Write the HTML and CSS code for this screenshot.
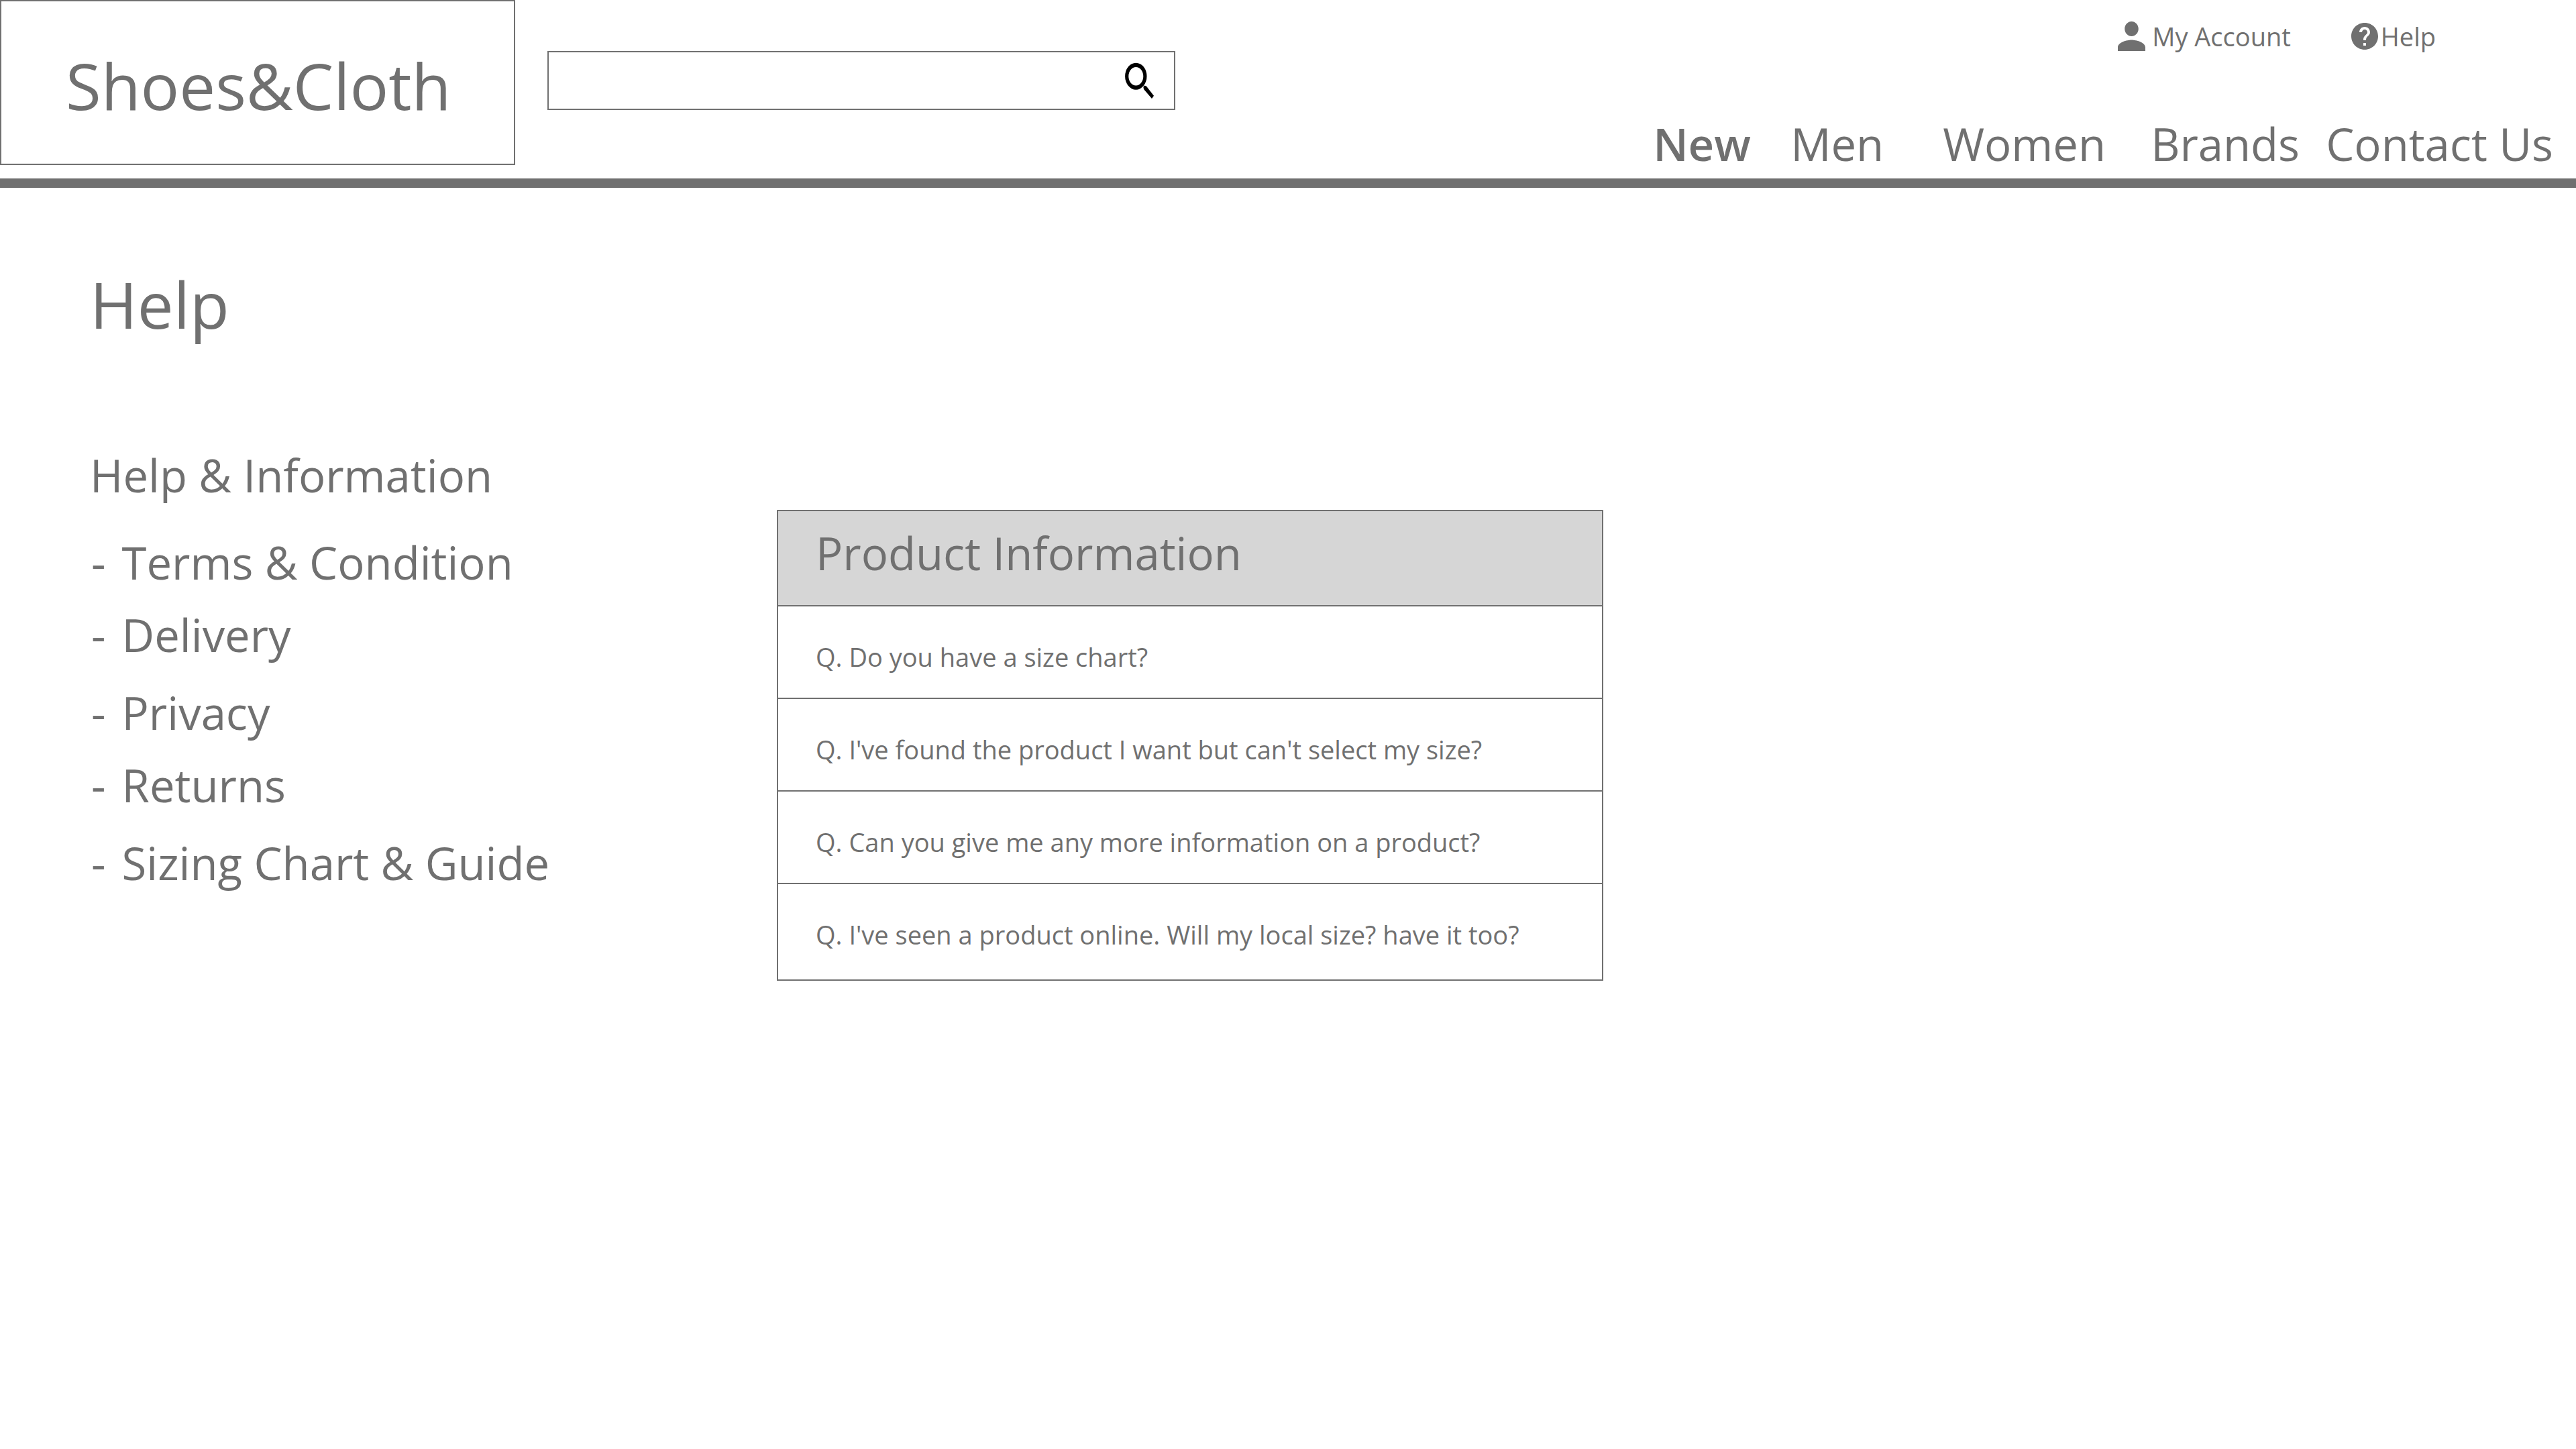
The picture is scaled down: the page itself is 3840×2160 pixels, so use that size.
FILE: index.html
```html
<!DOCTYPE html>
<html lang="en">
<head>
<meta charset="utf-8">
<meta name="viewport" content="width=device-width, initial-scale=1">
<title>Help - Shoes&amp;Cloth</title>
<link rel="stylesheet" href="styles.css">
</head>
<body>
<header class="header">
  <a class="logo" href="#">Shoes&amp;Cloth</a>
  <form class="search" role="search">
    <input class="search-input" type="search" aria-label="Search">
    <button class="search-button" type="submit" aria-label="Search">
      <svg class="search-icon" viewBox="0 0 48 58" aria-hidden="true">
        <path fill-rule="evenodd" d="M19.3 2.7a16.2 20 0 0 1 0 40a16.2 20 0 0 1 0-40zM19.3 9a11 13.7 0 0 0 0 27.4a11 13.7 0 0 0 0-27.4z"/>
        <path d="M30.3 38.2l2.2-1.7 2.4 1.1L46 51.8 43 56 31 42z"/>
      </svg>
    </button>
  </form>
  <div class="menus">
    <nav class="account" aria-label="Account">
      <a class="account-link" href="#">
        <svg class="icon-person" viewBox="4 4 16 16" preserveAspectRatio="none" aria-hidden="true"><path d="M12 12c2.21 0 4-1.79 4-4s-1.79-4-4-4-4 1.79-4 4 1.79 4 4 4zm0 2c-2.67 0-8 1.34-8 4v2h16v-2c0-2.66-5.33-4-8-4z"/></svg>
        My Account
      </a>
      <a class="account-link account-link-help" href="#">
        <svg class="icon-help" viewBox="2 2 20 20" aria-hidden="true"><path d="M12 2C6.48 2 2 6.48 2 12s4.48 10 10 10 10-4.48 10-10S17.52 2 12 2zm1 17h-2v-2h2v2zm2.07-7.75l-.9.92C13.45 12.9 13 13.5 13 15h-2v-.5c0-1.1.45-2.1 1.17-2.83l1.24-1.26c.37-.36.59-.86.59-1.41 0-1.1-.9-2-2-2s-2 .9-2 2H8c0-2.21 1.79-4 4-4s4 1.79 4 4c0 .88-.36 1.68-.93 2.25z"/></svg>
        Help
      </a>
    </nav>
    <nav class="nav" aria-label="Main">
      <a class="nav-new" href="#">New</a>
      <a href="#">Men</a>
      <a href="#">Women</a>
      <a href="#">Brands</a>
      <a href="#">Contact Us</a>
    </nav>
  </div>
</header>
<main class="main">
  <h1 class="title">Help</h1>
  <div class="columns">
    <aside class="topics">
      <h2 class="topics-title">Help &amp; Information</h2>
      <ul class="topics-list">
        <li><span>-</span><a href="#">Terms &amp; Condition</a></li>
        <li><span>-</span><a href="#">Delivery</a></li>
        <li><span>-</span><a href="#">Privacy</a></li>
        <li><span>-</span><a href="#">Returns</a></li>
        <li><span>-</span><a href="#">Sizing Chart &amp; Guide</a></li>
      </ul>
    </aside>
    <section class="faq">
      <h2 class="faq-title">Product Information</h2>
      <ul class="faq-list">
        <li><a href="#">Q. Do you have a size chart?</a></li>
        <li><a href="#">Q. I've found the product I want but can't select my size?</a></li>
        <li><a href="#">Q. Can you give me any more information on a product?</a></li>
        <li><a href="#">Q. I've seen a product online. Will my local size? have it too?</a></li>
      </ul>
    </section>
  </div>
</main>
</body>
</html>
```
FILE: styles.css
```css
:root {
  --ink: #707070;
  --size-small: 38px;
  --size-medium: 67px;
  --size-large: 96px;
}

* {
  box-sizing: border-box;
}

body {
  margin: 0;
  background: #fff;
  color: var(--ink);
  font-family: "Open Sans", "Noto Sans", sans-serif;
  font-size: var(--size-medium);
  line-height: 84px;
}

a {
  color: inherit;
  text-decoration: none;
}

h1,
h2,
ul {
  margin: 0;
  padding: 0;
  font-weight: 400;
  list-style: none;
}

svg {
  display: block;
  fill: currentColor;
}

/* Header */

.header {
  display: flex;
  align-items: flex-start;
  border-bottom: 14px solid var(--ink);
}

.logo {
  display: flex;
  align-items: center;
  flex: 0 0 20%;
  height: 246px;
  margin-bottom: 20px;
  padding: 8px 0 0 96px;
  border: 2px solid var(--ink);
  font-size: var(--size-large);
}

.search {
  display: flex;
  align-items: center;
  width: 936px;
  height: 88px;
  margin: 76px 0 0 48px;
  border: 2px solid var(--ink);
}

.search-input {
  flex: 1;
  min-width: 0;
  height: 100%;
  padding: 0 24px;
  border: 0;
  outline: 0;
  background: none;
  color: inherit;
  font: inherit;
  font-size: var(--size-small);
}

.search-button {
  padding: 0 28px 0 0;
  border: 0;
  background: none;
  color: #000;
}

.search-icon {
  width: 48px;
  height: 58px;
}

.menus {
  display: flex;
  flex-direction: column;
  align-items: flex-end;
  gap: 94px;
  margin-left: auto;
  padding: 30px 34px 10px 0;
}

.account {
  display: flex;
  gap: 90px;
  padding-right: 175px;
  font-size: var(--size-small);
  line-height: 48px;
}

.account-link {
  display: flex;
  align-items: center;
  gap: 10px;
}

.account-link-help {
  gap: 4px;
}

.icon-person {
  width: 41px;
  height: 44px;
}

.icon-help {
  width: 40px;
  height: 40px;
}

.nav {
  display: grid;
  grid-template-columns: 205px 227px 310px 261px auto;
  white-space: nowrap;
}

.nav-new {
  font-weight: 600;
}

/* Content */

.main {
  padding: 114px 134px;
}

.title {
  font-size: var(--size-large);
  line-height: 118px;
}

.columns {
  display: grid;
  grid-template-columns: 1024px minmax(0, 1232px);
  align-items: start;
  margin-top: 142px;
}

.topics {
  line-height: 108px;
}

.topics-title,
.faq-title {
  font-size: var(--size-medium);
}

.topics-list {
  margin-top: 22px;
  padding-left: 2px;
}

.topics-list li {
  display: flex;
  gap: 24px;
}

.topics-list li:nth-child(even) {
  margin-bottom: 8px;
}

.faq {
  margin-top: 106px;
  border: 2px solid var(--ink);
}

.faq-title {
  padding: 20px 56px 36px;
  background: #d6d6d6;
}

.faq-list {
  padding-bottom: 6px;
  font-size: var(--size-small);
  line-height: 48px;
}

.faq-list li {
  padding: 51px 56px 37px;
  border-top: 2px solid var(--ink);
}
```
